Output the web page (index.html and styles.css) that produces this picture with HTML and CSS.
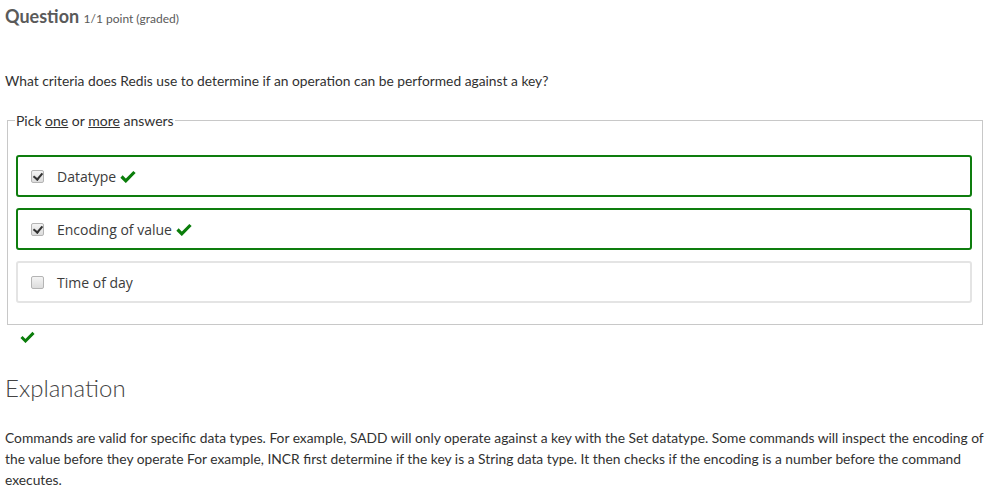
FILE: index.html
```html
<!DOCTYPE html>
<html>
<head>
<meta charset="utf-8">
<link rel="stylesheet" href="styles.css">
</head>
<body>
<div class="page">
  <h3 class="q-title">Question <span class="q-points">1/1 point (graded)</span></h3>
  <p class="q-text">What criteria does Redis use to determine if an operation can be performed against a key?</p>
  <fieldset class="choices">
    <legend class="legend">Pick <u>one</u> or <u>more</u> answers</legend>
    <label class="choice correct">
      <input class="cb" type="checkbox" checked disabled>
      <span class="choice-text">Datatype</span>
      <svg class="tick" viewBox="0 0 16 13" width="16" height="13"><path d="M1.5 6.5 L5.8 10.8 L14.5 2" fill="none" stroke="#0a7d0a" stroke-width="3.2" stroke-linejoin="miter"/></svg>
    </label>
    <label class="choice correct">
      <input class="cb" type="checkbox" checked disabled>
      <span class="choice-text">Encoding of value</span>
      <svg class="tick" viewBox="0 0 16 13" width="16" height="13"><path d="M1.5 6.5 L5.8 10.8 L14.5 2" fill="none" stroke="#0a7d0a" stroke-width="3.2" stroke-linejoin="miter"/></svg>
    </label>
    <label class="choice">
      <input class="cb" type="checkbox" disabled>
      <span class="choice-text">Time of day</span>
    </label>
  </fieldset>
  <div class="status">
    <svg viewBox="0 0 16 13" width="15" height="12"><path d="M1.5 6.5 L5.8 10.8 L14.5 2" fill="none" stroke="#0a7d0a" stroke-width="3.2"/></svg>
  </div>
  <h2 class="expl-title">Explanation</h2>
  <p class="expl">Commands are valid for specific data types. For example, SADD will only operate against a key with the Set datatype. Some commands will inspect the encoding of the value before they operate For example, INCR first determine if the key is a String data type. It then checks if the encoding is a number before the command executes.</p>
</div>
</body>
</html>
```
FILE: styles.css
```css
html, body {
  margin: 0;
  padding: 0;
  background: #fff;
}
body {
  font-family: Lato, "Open Sans", sans-serif;
  color: #313131;
}
.page {
  padding: 0 5px;
}
.q-title {
  margin: 0;
  padding-top: 4px;
  font-size: 18px;
  font-weight: 700;
  color: #5a5a5a;
  line-height: 24px;
}
.q-points {
  font-size: 12px;
  font-weight: 400;
  color: #5a5a5a;
}
.q-text {
  margin: 40px 0 0;
  font-size: 13.8px;
  line-height: 20px;
  color: #313131;
}
.choices {
  margin: 21px 3px 0 2px;
  padding: 26px 10px 21px 8px;
  border: 1px solid #c8c8c8;
  display: flex;
  flex-direction: column;
  gap: 11px;
  min-width: 0;
}
.legend {
  padding: 0 1px;
  margin-left: -1px;
  font-size: 14px;
  color: #313131;
}
.choice {
  display: flex;
  align-items: center;
  height: 38px;
  border: 2px solid #e4e4e4;
  border-radius: 3px;
  padding-left: 12px;
  font-family: "Open Sans", sans-serif;
  font-size: 14px;
  color: #3c3c3c;
}
.choice.correct {
  border-color: #0e7d0e;
}
.cb {
  appearance: none;
  -webkit-appearance: none;
  margin: 0 13px 0 1px;
  width: 13px;
  height: 13px;
  border: 1px solid #b4b4b4;
  border-radius: 2px;
  background: linear-gradient(#f4f4f4, #dcdcdc);
  position: relative;
}
.cb:checked::after {
  content: "";
  position: absolute;
  left: 3px;
  top: 0px;
  width: 4px;
  height: 7px;
  border: solid #333;
  border-width: 0 2px 2px 0;
  transform: rotate(40deg);
}
.tick {
  margin-left: 4px;
}
.status {
  padding: 2px 0 0 15px;
  height: 14px;
}
.expl-title {
  margin: 32px 0 0;
  font-size: 24px;
  font-weight: 300;
  color: #444;
  line-height: 30px;
}
.expl {
  margin: 24px 0 0;
  font-size: 13.8px;
  line-height: 21px;
  color: #313131;
}
```
